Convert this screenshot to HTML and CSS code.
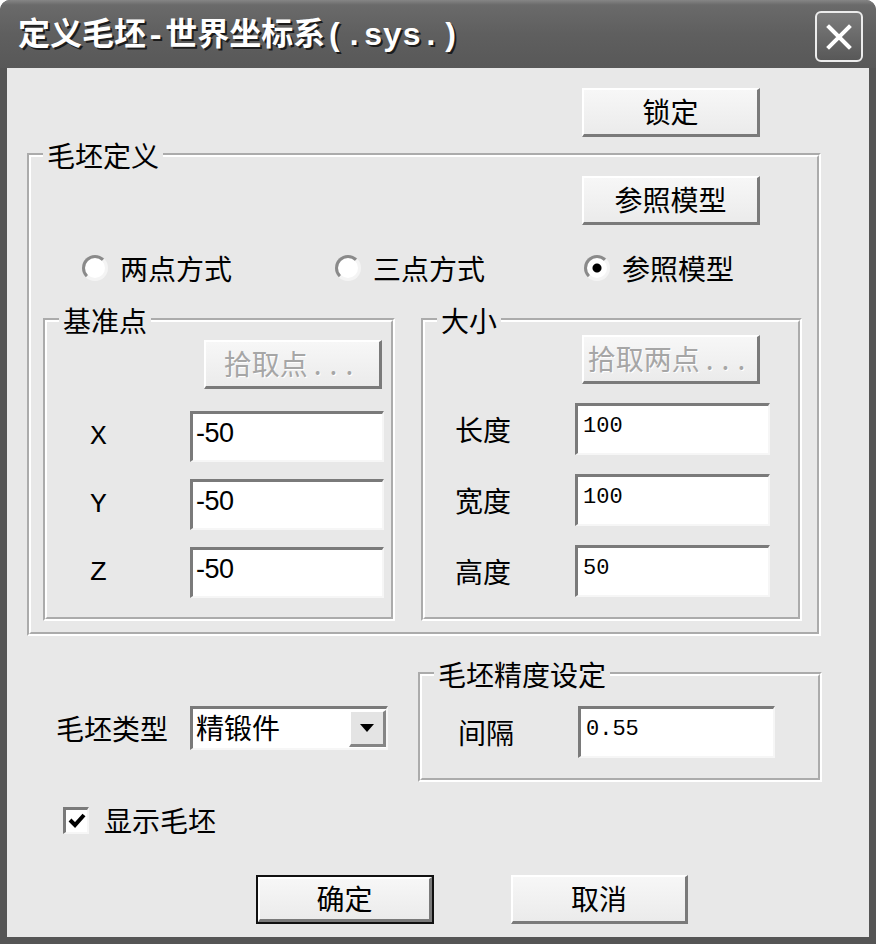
FILE: index.html
```
<!DOCTYPE html>
<html lang="zh-CN">
<head>
  <meta charset="UTF-8" />
  <title>定义毛坯-世界坐标系(.sys.)</title>
  <link rel="stylesheet" href="styles.css">
</head>
<body>
  <div class="window">
    <div class="titlebar">
      <span class="title">定义毛坯-世界坐标系(.sys.)</span>
      <button class="close" aria-label="关闭">
        <svg width="26" height="26" viewBox="0 0 26 26"><path d="M3 3 L23 23 M23 3 L3 23" stroke="#fff" stroke-width="4" stroke-linecap="square" fill="none"/></svg>
      </button>
    </div>

    <div class="client">
      <div class="row-end top-actions">
        <button class="btn">锁定</button>
      </div>

      <fieldset class="group group-main">
        <legend>毛坯定义</legend>
        <div class="row-end model-actions">
          <button class="btn">参照模型</button>
        </div>
        <div class="modes">
          <label class="option"><input type="radio" name="mode" class="radio">两点方式</label>
          <label class="option"><input type="radio" name="mode" class="radio">三点方式</label>
          <label class="option"><input type="radio" name="mode" class="radio" checked>参照模型</label>
        </div>

        <div class="subgroups">
          <fieldset class="group group-base">
            <legend>基准点</legend>
            <div class="row-end pick-base">
              <button class="btn" disabled>拾取点<span class="dots">...</span></button>
            </div>
            <div class="fields fields-base">
              <span class="axis">X</span><input class="field num-lg" value="-50">
              <span class="axis">Y</span><input class="field num-lg" value="-50">
              <span class="axis">Z</span><input class="field num-lg" value="-50">
            </div>
          </fieldset>

          <fieldset class="group group-size">
            <legend>大小</legend>
            <div class="row-end pick-size">
              <button class="btn" disabled>拾取两点<span class="dots">...</span></button>
            </div>
            <div class="fields fields-size">
              <span class="label">长度</span><input class="field num-sm" value="100">
              <span class="label">宽度</span><input class="field num-sm" value="100">
              <span class="label">高度</span><input class="field num-sm" value="50">
            </div>
          </fieldset>
        </div>
      </fieldset>

      <div class="lower">
        <div class="blank-type">
          <span class="label">毛坯类型</span>
          <div class="combo">
            <span class="combo-value">精锻件</span>
            <span class="combo-btn">
              <svg width="14" height="8" viewBox="0 0 14 8"><polygon points="0,0 14,0 7,8" fill="#000"/></svg>
            </span>
          </div>
        </div>

        <fieldset class="group group-precision">
          <legend>毛坯精度设定</legend>
          <div class="fields fields-precision">
            <span class="label">间隔</span><input class="field num-sm" value="0.55">
          </div>
        </fieldset>
      </div>

      <label class="check">
        <span class="check-box">
          <svg width="18" height="16" viewBox="0 0 18 16"><path d="M2 7 L7 12 L16 2" stroke="#000" stroke-width="4" fill="none"/></svg>
        </span>
        显示毛坯
      </label>

      <div class="actions">
        <button class="btn btn-default">确定</button>
        <button class="btn">取消</button>
      </div>
    </div>
  </div>
</body>
</html>
```

FILE: styles.css
```
body {
  margin: 0;
  background: #fff;
  font-family: "Noto Sans CJK SC", sans-serif;
  color: #000;
}
.window {
  width: 876px;
  height: 944px;
  background: #555;
  border-radius: 10px 10px 0 0;
  display: flex;
  flex-direction: column;
}
.titlebar {
  height: 68px;
  flex: none;
  display: flex;
  align-items: flex-start;
  background: linear-gradient(#858585 0, #6a6a6a 5px, #5f5f5f 34px, #585858 100%);
  border-radius: 10px 10px 0 0;
}
.title {
  margin: 19px 0 0 18px;
  color: #fff;
  font: bold 32px/36px "Liberation Mono", "Noto Sans CJK SC", monospace;
  text-shadow: 2px 2px 0 #1c1c1c;
  white-space: nowrap;
}
.close {
  margin: 11px 13px 0 auto;
  width: 48px;
  height: 51px;
  padding: 0;
  border: 2px solid #ececec;
  border-radius: 6px;
  background: linear-gradient(#7c7c7c, #585858);
  display: flex;
  align-items: center;
  justify-content: center;
}
.client {
  flex: 1;
  margin: 0 7px 7px;
  background: #e8e8e8;
  display: flex;
  flex-direction: column;
}

/* buttons */
.btn {
  box-sizing: border-box;
  width: 178px;
  height: 49px;
  padding: 0 0 3px;
  background: linear-gradient(#f7f7f7, #ebebeb);
  border-style: solid;
  border-width: 2px 3px 3px 2px;
  border-color: #fff #7a7a7a #7a7a7a #fff;
  font: 28px/30px "Noto Sans CJK SC", sans-serif;
  color: #000;
}
.btn:disabled {
  color: #a6a6a6;
  text-shadow: 1px 1px 0 #fff;
}
.dots {
  letter-spacing: 8px;
  margin-left: 6px;
}
.btn-default {
  width: 174px;
  height: 45px;
  margin: 2px;
  outline: 2px solid #111;
}
.row-end {
  display: flex;
  justify-content: flex-end;
}
.top-actions {
  margin-top: 20px;
  padding-right: 109px;
}

/* group boxes */
.group {
  box-sizing: border-box;
  margin: 0;
  padding: 0;
  min-width: 0;
  border: 4px groove #fff;
}
.group legend {
  margin-left: 12px;
  padding: 0 4px;
  font-size: 28px;
  line-height: 30px;
}
.group-main {
  width: 794px;
  margin: 3px 0 0 20px;
  padding-bottom: 11px;
}
.model-actions {
  margin-top: 6px;
  padding-right: 57px;
}
.modes {
  display: flex;
  margin-top: 28px;
  padding-left: 51px;
}
.option {
  flex: none;
  width: 253px;
  display: flex;
  align-items: center;
  gap: 12px;
  font-size: 28px;
  line-height: 30px;
}
.option:nth-child(2) {
  width: 249px;
}
.option:last-child {
  width: 200px;
}
.radio {
  appearance: none;
  box-sizing: border-box;
  width: 26px;
  height: 26px;
  margin: 0;
  border-radius: 50%;
  border: 3px solid;
  border-color: #8a8a8a #f4f4f4 #f4f4f4 #8a8a8a;
  background: #fff;
}
.radio:checked {
  background: radial-gradient(circle, #000 0 4px, #fff 5px);
}
.subgroups {
  display: flex;
  gap: 26px;
  margin: 22px 0 0 12px;
}
.group-base {
  width: 352px;
}
.group-size {
  width: 381px;
}
.pick-base {
  margin-top: 5px;
  padding-right: 9px;
}
.pick-size {
  padding-right: 38px;
}

/* label + field grids */
.fields {
  display: grid;
  align-items: center;
}
.fields-base {
  grid-template-columns: 100px 194px;
  row-gap: 17px;
  margin-top: 22px;
  padding: 0 0 19px 43px;
}
.fields-size {
  grid-template-columns: 120px 195px;
  row-gap: 19px;
  margin-top: 19px;
  padding: 0 0 19px 30px;
}
.fields-precision {
  grid-template-columns: 120px 197px;
  margin-top: 17px;
  padding: 0 0 20px 36px;
}
.label {
  font-size: 28px;
  line-height: 30px;
}
.axis {
  font: 28px/30px "Liberation Mono", monospace;
}
.field {
  box-sizing: border-box;
  width: 100%;
  margin: 0;
  background: #fff;
  border-style: solid;
  border-width: 3px 2px 2px 3px;
  border-color: #7a7a7a #f6f6f6 #f6f6f6 #7a7a7a;
  outline: none;
  color: #000;
}
.num-lg {
  height: 51px;
  padding: 5px 3px 13px;
  font: 27px "Liberation Sans", sans-serif;
  letter-spacing: -0.5px;
}
.num-sm {
  height: 52px;
  padding: 8px 5px 14px;
  font: 22px "Liberation Mono", monospace;
}

/* bottom part */
.lower {
  display: flex;
  align-items: flex-start;
  margin-top: 23px;
  padding-left: 49px;
}
.blank-type {
  width: 362px;
  display: flex;
  align-items: center;
  margin-top: 47px;
}
.blank-type .label {
  margin-right: 22px;
}
.combo {
  box-sizing: border-box;
  width: 198px;
  height: 44px;
  display: flex;
  align-items: center;
  background: #fff;
  border-style: solid;
  border-width: 3px 2px 2px 3px;
  border-color: #7a7a7a #f6f6f6 #f6f6f6 #7a7a7a;
}
.combo-value {
  flex: 1;
  padding: 0 0 4px 3px;
  font-size: 28px;
  line-height: 30px;
}
.combo-btn {
  box-sizing: border-box;
  width: 37px;
  height: 37px;
  display: flex;
  align-items: center;
  justify-content: center;
  background: #e4e4e4;
  border-style: solid;
  border-width: 2px 3px 3px 2px;
  border-color: #fff #858585 #858585 #fff;
}
.group-precision {
  width: 404px;
}
.check {
  display: flex;
  align-items: center;
  gap: 15px;
  margin: 23px 0 0 56px;
  font-size: 28px;
  line-height: 30px;
}
.check-box {
  box-sizing: border-box;
  width: 26px;
  height: 27px;
  display: flex;
  align-items: center;
  justify-content: center;
  background: #fff;
  border-style: solid;
  border-width: 3px 2px 2px 3px;
  border-color: #7a7a7a #f6f6f6 #f6f6f6 #7a7a7a;
}
.actions {
  display: flex;
  align-items: flex-start;
  gap: 77px;
  margin-top: 40px;
  padding-left: 249px;
}
.actions .btn:last-child {
  width: 177px;
}
```
